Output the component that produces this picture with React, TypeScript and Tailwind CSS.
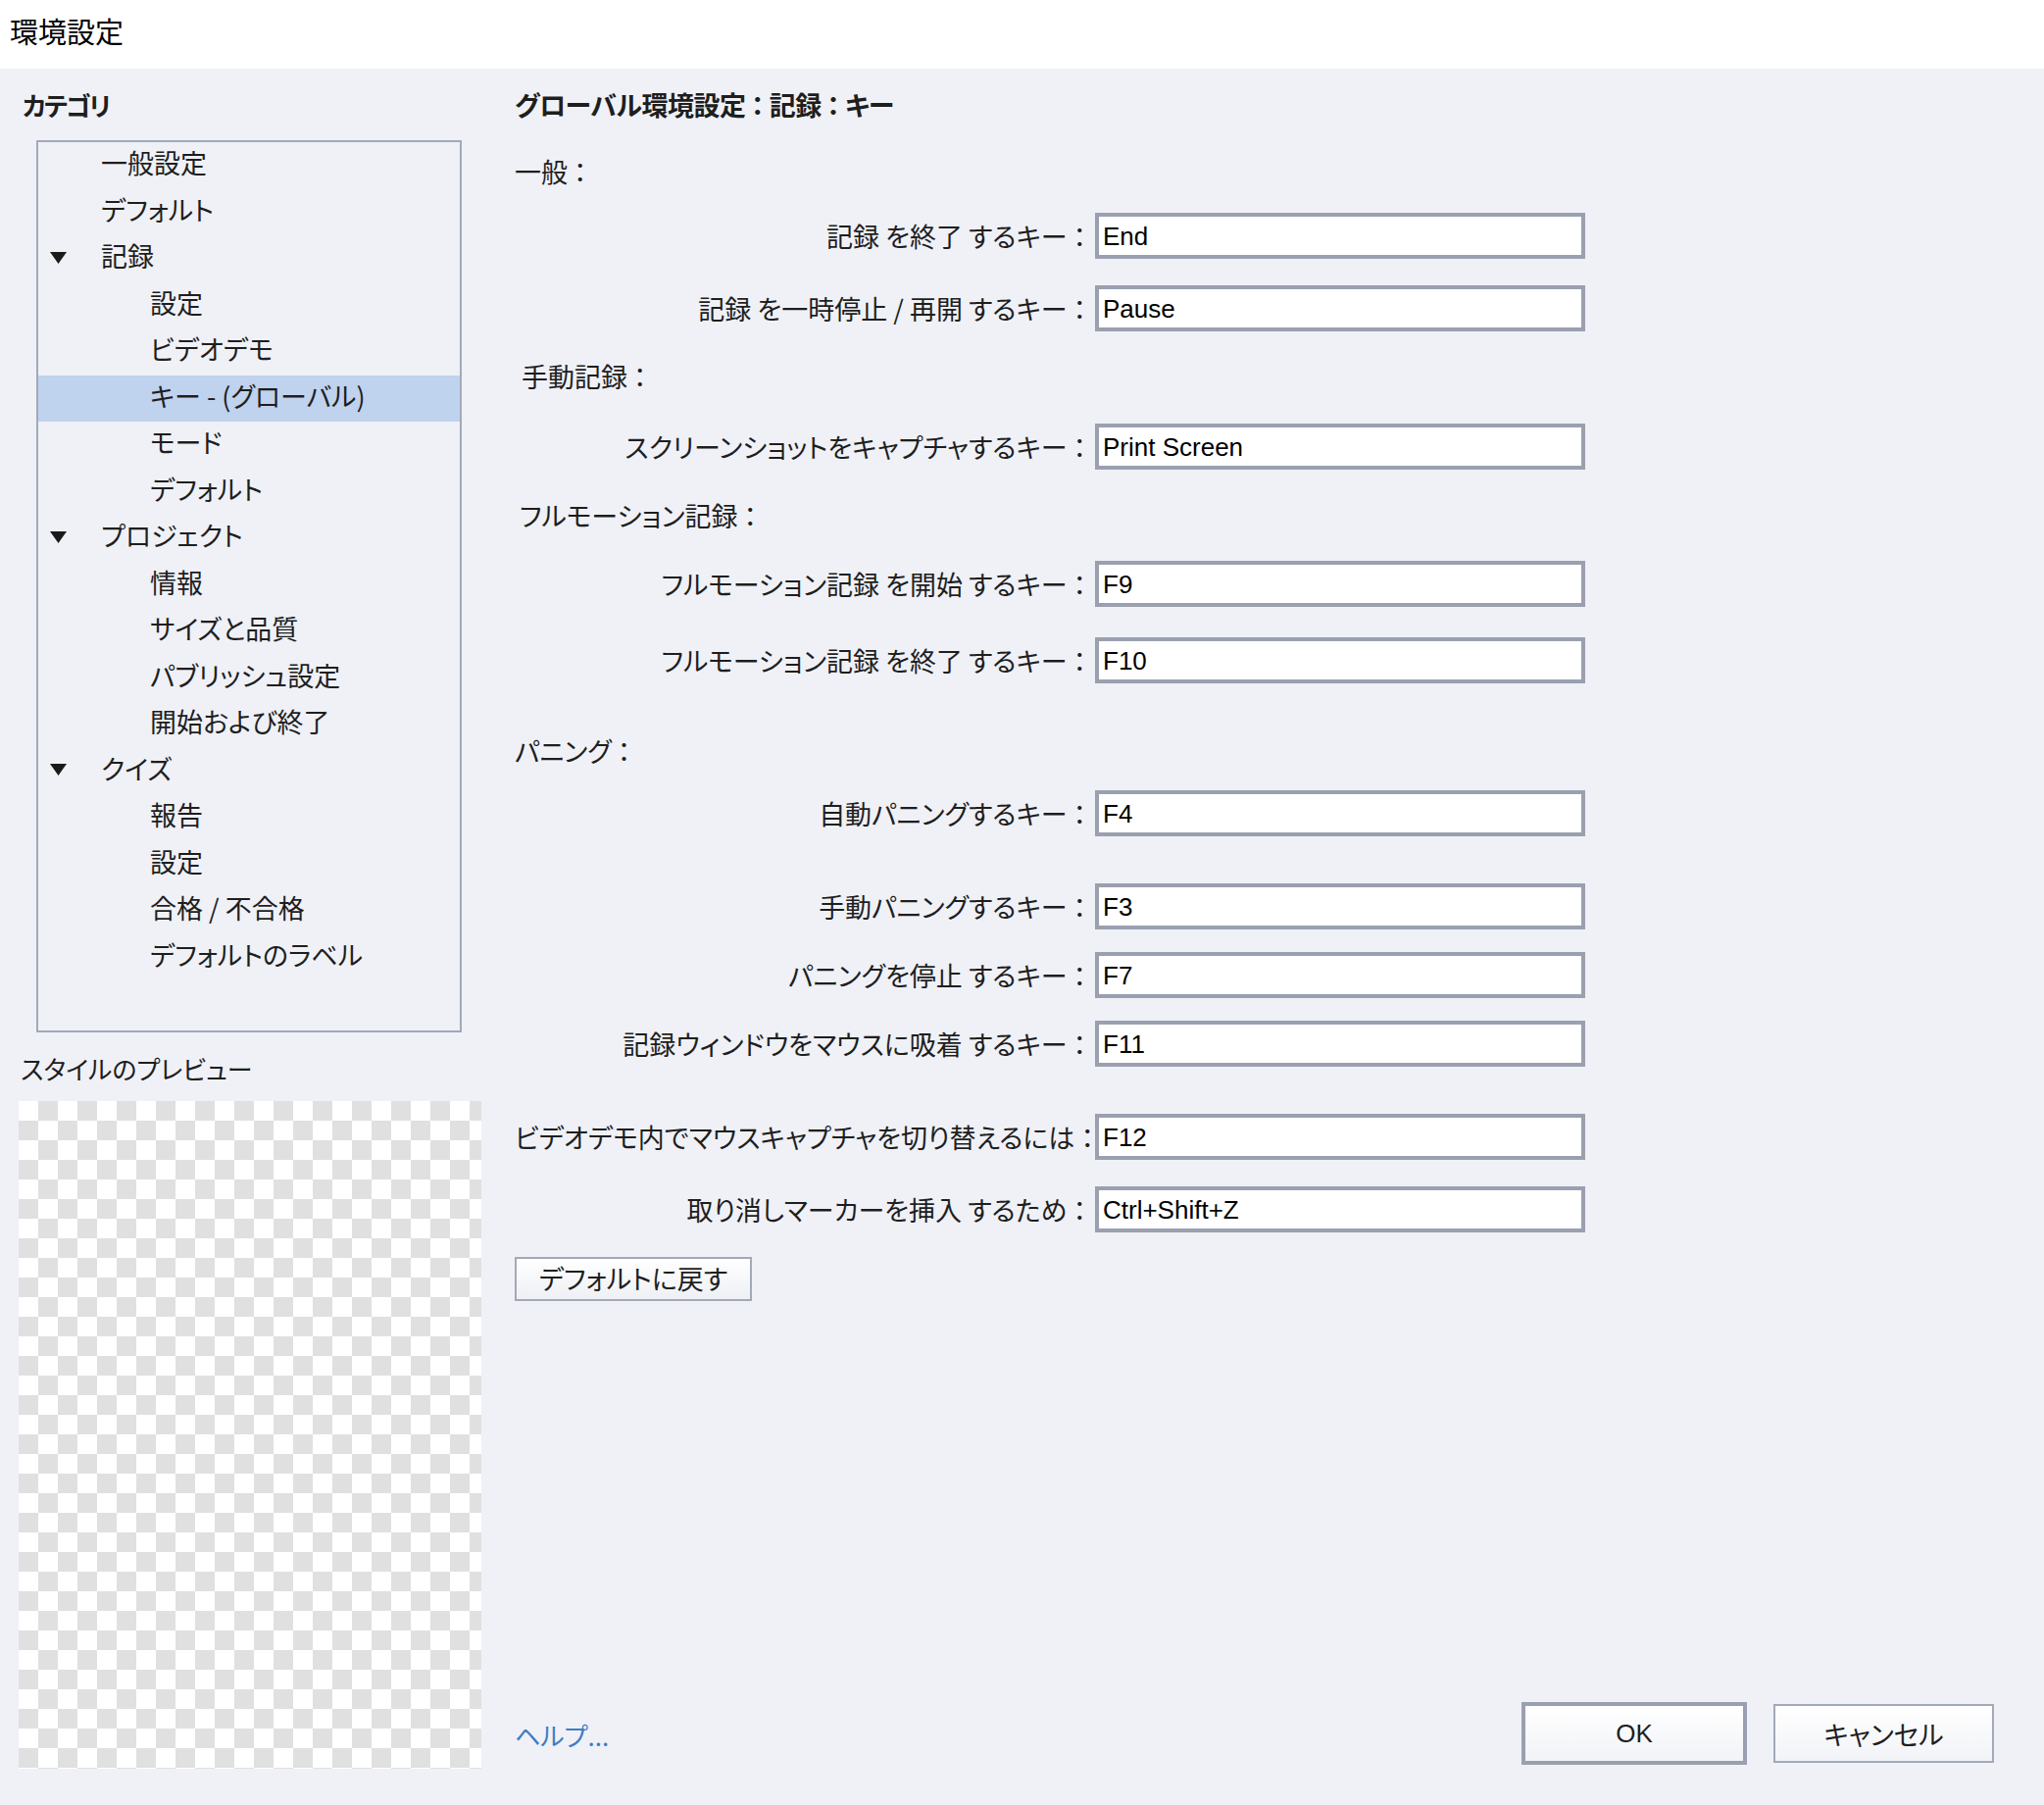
const jp = "font-['Noto_Sans_CJK_JP','Noto_Sans',sans-serif] [font-feature-settings:'palt']";
const latin = "font-['Liberation_Sans','Noto_Sans_CJK_JP',sans-serif]";

const tree = [
  { label: '一般設定', level: 1 },
  { label: 'デフォルト', level: 1 },
  { label: '記録', level: 1, open: true },
  { label: '設定', level: 2 },
  { label: 'ビデオデモ', level: 2 },
  { label: 'キー - (グローバル)', level: 2, selected: true },
  { label: 'モード', level: 2 },
  { label: 'デフォルト', level: 2 },
  { label: 'プロジェクト', level: 1, open: true },
  { label: '情報', level: 2 },
  { label: 'サイズと品質', level: 2 },
  { label: 'パブリッシュ設定', level: 2 },
  { label: '開始および終了', level: 2 },
  { label: 'クイズ', level: 1, open: true },
  { label: '報告', level: 2 },
  { label: '設定', level: 2 },
  { label: '合格 / 不合格', level: 2 },
  { label: 'デフォルトのラベル', level: 2 },
];

function Triangle() {
  return (
    <svg width="19" height="14" viewBox="0 0 19 14" className="shrink-0">
      <path d="M1 1 L18 1 L9.5 13 Z" fill="#1a1a1a" />
    </svg>
  );
}

function TreeRow({ item }: { item: (typeof tree)[number] }) {
  return (
    <div
      className={`flex h-[47.5px] items-center pb-[6px] ${item.selected ? 'bg-[#bfd2ee]' : ''}`}
    >
      <div className="flex w-[64px] shrink-0 justify-start pl-[11px] pt-[4px]">
        {item.open ? <Triangle /> : null}
      </div>
      <span className={`${item.level === 2 ? 'pl-[50px]' : ''} whitespace-nowrap text-[27px] leading-none text-[#1e1e1e]`}>
        {item.label}
      </span>
    </div>
  );
}

function KeyRow({ label, value, mt }: { label: string; value: string; mt: string }) {
  return (
    <div className={`flex items-center ${mt}`}>
      <div className="w-[585px] shrink-0 whitespace-pre pr-[2px] text-right text-[27px] leading-none text-[#1e1e1e]">
        {label}
      </div>
      <div className="ml-[7px] flex h-[47px] w-[500px] items-center border-[4px] border-[#9aa0af] bg-white px-[4px]">
        <span className={`${latin} text-[26px] leading-none text-black`}>{value}</span>
      </div>
    </div>
  );
}

function Heading({ children, mt, pl = '' }: { children: string; mt: string; pl?: string }) {
  return (
    <div className={`flex h-[36px] items-center whitespace-pre text-[27px] leading-none text-[#1e1e1e] ${mt} ${pl}`}>
      {children}
    </div>
  );
}

export default function App() {
  return (
    <div className={`${jp} h-[1841px] w-[2085px] bg-[#eff1f7]`}>
      <div className="flex h-[70px] items-center bg-white pb-[8px] pl-[10px] text-[29px] leading-none text-black">
        環境設定
      </div>

      <div className="flex h-[1771px]">
        {/* left column */}
        <div className="flex w-[525px] shrink-0 flex-col pl-[19px]">
          <div className="mt-[19px] flex h-[36px] items-center pl-[4px] text-[26px] font-bold leading-none tracking-[-2px] text-[#1e1e1e]">
            カテゴリ
          </div>
          <div className="ml-[18px] mt-[18px] h-[910px] w-[434px] border-2 border-[#a2a9b8] bg-[#eff1f7]">
            {tree.map((item, i) => (
              <TreeRow key={i} item={item} />
            ))}
          </div>
          <div className="mt-[19px] flex h-[36px] items-center pl-[2px] text-[26px] leading-none text-[#1e1e1e]">
            スタイルのプレビュー
          </div>
          <div className="mt-[15px] h-[681px] w-[472px] bg-[conic-gradient(#e0e0e0_25%,#ffffff_0_50%,#e0e0e0_0_75%,#ffffff_0)] bg-[length:40px_40px]" />
        </div>

        {/* right column */}
        <div className="flex flex-1 flex-col">
          <div className="mt-[18px] flex h-[36px] items-center whitespace-pre text-[27px] font-bold leading-none tracking-[-0.5px] text-[#1e1e1e]">
            グローバル環境設定 ： 記録 ： キー
          </div>

          <Heading mt="mt-[32px]">一般 ：</Heading>
          <KeyRow mt="mt-[25px]" label="記録 を終了 するキー ：" value="End" />
          <KeyRow mt="mt-[27px]" label="記録 を一時停止 / 再開 するキー ：" value="Pause" />

          <Heading mt="mt-[27px]" pl="pl-[7px]">手動記録 ：</Heading>
          <KeyRow mt="mt-[31px]" label="スクリーンショットをキャプチャするキー ：" value="Print Screen" />

          <Heading mt="mt-[28px]" pl="pl-[5px]">フルモーション記録 ：</Heading>
          <KeyRow mt="mt-[29px]" label="フルモーション記録 を開始 するキー ：" value="F9" />
          <KeyRow mt="mt-[31px]" label="フルモーション記録 を終了 するキー ：" value="F10" />

          <Heading mt="mt-[50px]">パニング ：</Heading>
          <KeyRow mt="mt-[23px]" label="自動パニングするキー ：" value="F4" />
          <KeyRow mt="mt-[48px]" label="手動パニングするキー ：" value="F3" />
          <KeyRow mt="mt-[23px]" label="パニングを停止 するキー ：" value="F7" />
          <KeyRow mt="mt-[23px]" label="記録ウィンドウをマウスに吸着 するキー ：" value="F11" />

          <KeyRow mt="mt-[48px]" label="ビデオデモ内でマウスキャプチャを切り替えるには ：" value="F12" />
          <KeyRow mt="mt-[27px]" label="取り消しマーカーを挿入 するため ：" value="Ctrl+Shift+Z" />

          <div className="mt-[25px] flex">
            <button className="flex h-[45px] w-[242px] items-center justify-center border-2 border-[#a2a9b8] bg-gradient-to-b from-white to-[#eef0f4] pb-[3px] text-[27px] leading-none text-[#1e1e1e]">
              デフォルトに戻す
            </button>
          </div>

          <div className="mb-[41px] mt-auto flex items-center pr-[51px]">
            <span className="pt-[4px] text-[26px] leading-none text-[#3f7cc4]">ヘルプ...</span>
            <div className="ml-auto flex items-center gap-[27px]">
              <button className={`${latin} flex h-[64px] w-[230px] items-center justify-center border-[4px] border-[#9aa0af] bg-gradient-to-b from-white to-[#f1f3f7] text-[26px] leading-none text-[#1e1e1e]`}>
                OK
              </button>
              <button className="flex h-[60px] w-[225px] items-center justify-center border-2 border-[#a2a9b8] bg-gradient-to-b from-white to-[#f1f3f7] text-[27px] leading-none text-[#1e1e1e]">
                キャンセル
              </button>
            </div>
          </div>
        </div>
      </div>
    </div>
  );
}
